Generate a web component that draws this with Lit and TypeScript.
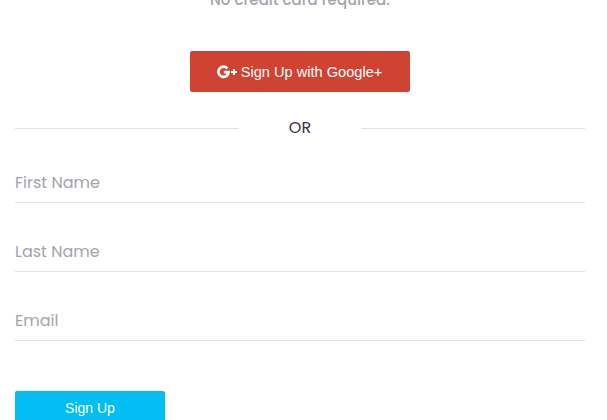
import { LitElement, html, css, svg } from "lit";
import { customElement, property } from "lit/decorators.js";

const googlePlus = svg`<svg class="icon" viewBox="0 0 20 14" aria-hidden="true">
  <path d="M10.4 3.5A5.1 5.1 0 1 0 11.6 7.1H6.8" fill="none" stroke="#fff" stroke-width="2.7"/>
  <path d="M17 4V10M14 7H20" fill="none" stroke="#fff" stroke-width="2"/>
</svg>`;

@customElement("line-field")
export class LineField extends LitElement {
  @property() label = "";

  static styles = css`
    :host { display: block; height: 42px; }
    .input {
      box-sizing: border-box;
      display: block;
      width: 100%;
      height: 42px;
      margin: 0;
      padding: 1px 0 0;
      border: 0;
      border-bottom: 1px solid #dde5e5;
      border-radius: 0;
      outline: 0;
      background: transparent;
      color: #36323c;
      font: 400 16px Poppins, Inter, sans-serif;
    }
    .input::placeholder { color: #a5a3ab; opacity: 1; }
  `;

  render() {
    return html`<input class="input" aria-label=${this.label} placeholder=${this.label}>`;
  }
}

@customElement("app-root")
export class AppRoot extends LitElement {
  static styles = css`
    :host {
      box-sizing: border-box;
      display: block;
      width: 607px;
      height: 420px;
      padding: 0 22px 0 15px;
      overflow: hidden;
      background: #fff;
      font-family: Poppins, Inter, sans-serif;
    }
    .note {
      height: 24px;
      margin: -12px 0 39px;
      color: #a5a3ab;
      font-size: 15px;
      font-weight: 500;
      letter-spacing: 0.06px;
      line-height: 24px;
      text-align: center;
    }
    .button {
      box-sizing: border-box;
      display: flex;
      align-items: center;
      justify-content: center;
      margin: 0;
      padding: 0;
      border: 0;
      border-radius: 2px;
      color: #fff;
      font-family: "Liberation Sans", Arial, sans-serif;
      white-space: nowrap;
    }
    .google {
      width: 220px;
      height: 41px;
      margin: 0 auto;
      padding-right: 1px;
      gap: 4px;
      background: #cf4332;
      font-size: 14.6px;
    }
    .icon { width: 20px; height: 14px; }
    .divider {
      display: flex;
      align-items: center;
      height: 24px;
      margin: 24px 0 21px;
    }
    .rule { flex: 1; height: 1px; background: #dde5e5; }
    .or {
      width: 122px;
      color: #36323c;
      font-size: 16px;
      line-height: 24px;
      text-align: center;
    }
    .fields { display: grid; gap: 27px; }
    .submit {
      width: 150px;
      height: 36px;
      margin-top: 50px;
      padding-bottom: 2px;
      background: #02bef2;
      font-size: 14px;
    }
  `;

  render() {
    return html`
      <div class="note">No credit card required.</div>
      <button class="button google">${googlePlus}<span>Sign Up with Google+</span></button>
      <div class="divider"><span class="rule"></span><span class="or">OR</span><span class="rule"></span></div>
      <div class="fields">
        <line-field label="First Name"></line-field>
        <line-field label="Last Name"></line-field>
        <line-field label="Email"></line-field>
      </div>
      <button class="button submit">Sign Up</button>
    `;
  }
}
